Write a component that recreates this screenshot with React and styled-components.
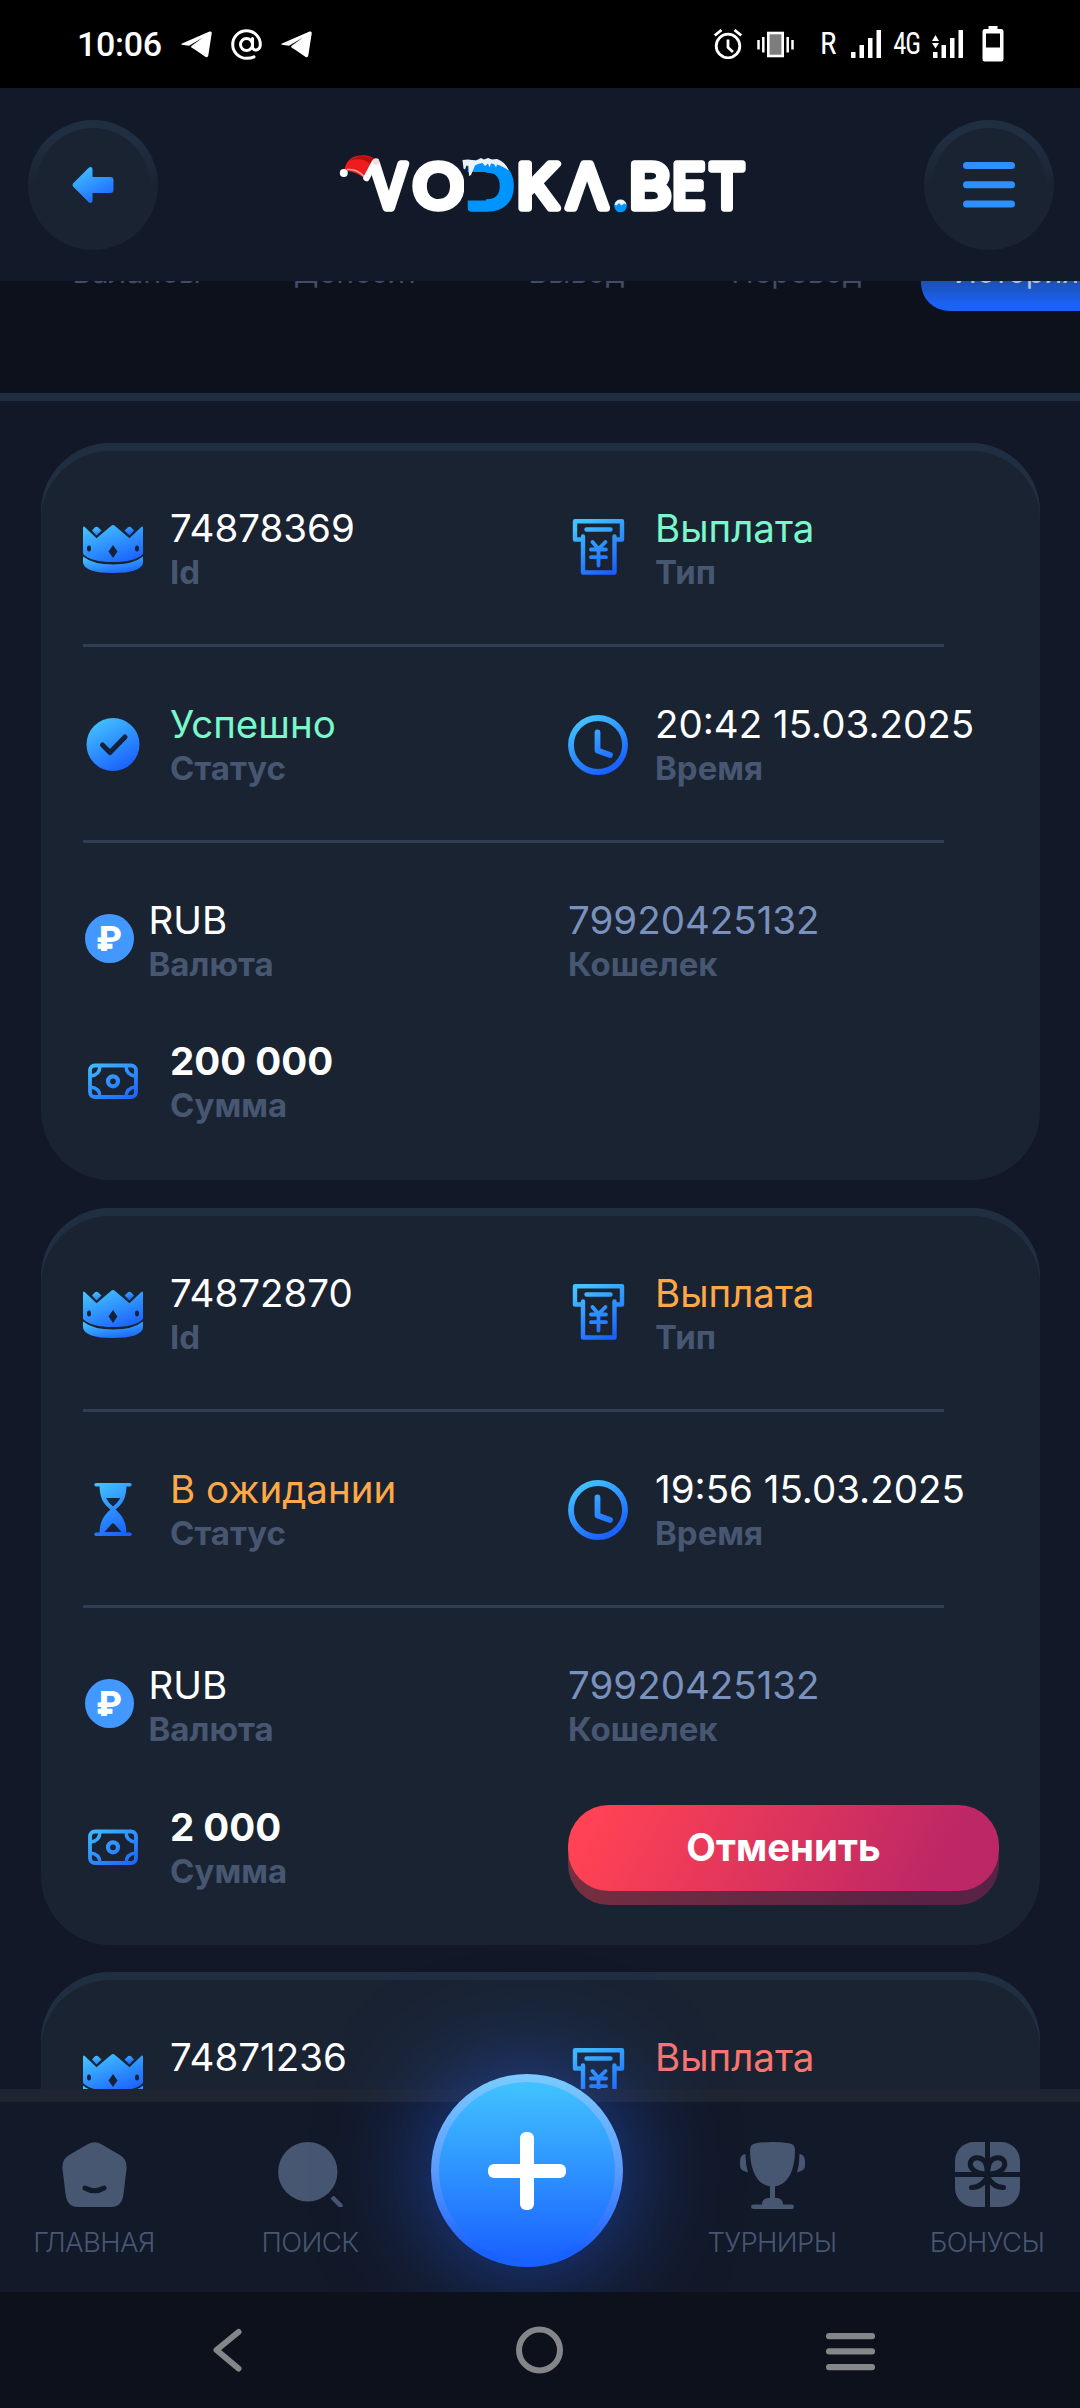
import React from "react";
import styled, { createGlobalStyle } from "styled-components";

const GlobalStyle = createGlobalStyle`
  * {
    box-sizing: border-box;
  }

  body {
    margin: 0;
    background: #121928;
    font-family: Inter, "Noto Sans", sans-serif;
  }

  svg {
    display: block;
    flex-shrink: 0;
  }
`;

const Screen = styled.div`
  width: 1080px;
  height: 2408px;
  display: flex;
  flex-direction: column;
  overflow: hidden;
  background: #121827;
`;

/* ---------- status bar ---------- */

const StatusBar = styled.div`
  height: 88px;
  flex-shrink: 0;
  display: flex;
  align-items: center;
  justify-content: space-between;
  padding: 0 76px 0 77px;
  background: #000;
  color: #fff;
  font-family: Roboto, sans-serif;
`;

const StatusGroup = styled.div`
  display: flex;
  align-items: center;
  gap: ${(props) => props.$gap}px;
`;

const StatusTime = styled.span`
  font-size: 34px;
  line-height: 40px;
  font-weight: 500;
  letter-spacing: -0.3px;
`;

const StatusLetter = styled.span`
  display: flex;
  justify-content: flex-end;
  width: ${(props) => props.$width}px;
  margin: 0 ${(props) => (props.$close ? "-3px 0 -6px" : "0")};
  font-family: "Roboto Condensed", Roboto, sans-serif;
  font-size: 31px;
  line-height: 36px;
  letter-spacing: -1.5px;

  span {
    transform: ${(props) => (props.$close ? "scaleX(0.86)" : "none")};
    transform-origin: right;
  }
`;

const BatterySlot = styled.div`
  margin-left: 3px;
`;

/* ---------- header ---------- */

const Header = styled.header`
  height: 193px;
  flex-shrink: 0;
  display: flex;
  align-items: center;
  justify-content: space-between;
  padding: 0 26px 0 28px;
  background: #121928;
  position: relative;
  z-index: 2;
`;

const RoundButton = styled.button`
  width: 130px;
  height: 130px;
  padding: 0;
  display: flex;
  align-items: center;
  justify-content: center;
  border: 8px solid transparent;
  border-radius: 50%;
  background: linear-gradient(#1a2332, #1a2332) padding-box,
    linear-gradient(#202e42 15%, #1a2332 50%) border-box;
`;

const LogoSvg = styled.svg`
  margin-left: 4px;

  text {
    font-family: Inter, sans-serif;
    font-weight: 400;
    font-size: 61px;
    stroke-width: 7.5px;
    stroke-linejoin: round;
  }
`;

/* ---------- tabs ---------- */

const TabsPanel = styled.nav`
  height: 120px;
  flex-shrink: 0;
  overflow: hidden;
  background: #0d111b;
  border-bottom: 8px solid #202e42;
`;

const TabsRow = styled.div`
  display: flex;
  gap: 27px;
  margin-top: -52px;
  padding-left: 41px;
`;

const Tab = styled.div`
  width: 193px;
  height: 82px;
  flex-shrink: 0;
  display: flex;
  align-items: center;
  justify-content: center;
  padding: 3px 2px 0 0;
  border-radius: 28px;
  font-size: 30.3px;
  color: ${(props) => (props.$active ? "#b3bfd6" : "#414c65")};
  background: ${(props) => (props.$active ? "linear-gradient(#1d4fa8 60%, #1b62f8 92%)" : "none")};
`;

/* ---------- cards ---------- */

const List = styled.main`
  flex: 1;
  min-height: 0;
  overflow: hidden;
  display: flex;
  flex-direction: column;
  gap: 27.5px;
  padding: 42px 40px 0 41px;
`;

const Card = styled.section`
  height: 737px;
  flex-shrink: 0;
  padding: 64px 41px 0 42px;
  border-radius: 69px;
  background: #1a2332;
  box-shadow: inset 0 8px 0 #202e42;
`;

const Row = styled.div`
  display: grid;
  grid-template-columns: 485px 1fr;
  align-items: center;
  height: 84px;
  margin-bottom: ${(props) => (props.$last ? 0 : 57)}px;
`;

const Divider = styled.hr`
  width: 861px;
  height: 3px;
  margin: -4px 0 56px;
  border: 0;
  background: #303d52;
`;

const Field = styled.div`
  display: flex;
  align-items: center;
  gap: ${(props) => (props.$tight ? 15 : 27)}px;
`;

const tones = {
  plain: "#ffffff",
  success: "#7af7cb",
  pending: "#ffa846",
  failed: "#f8766f",
  muted: "#7b91bd",
};

const Value = styled.div`
  font-size: 38.5px;
  line-height: 42px;
  font-weight: ${(props) => (props.$bold ? 700 : 400)};
  color: ${(props) => tones[props.$tone || "plain"]};
  white-space: nowrap;
`;

const Label = styled.div`
  font-size: 33px;
  line-height: 46px;
  margin-bottom: -4px;
  font-weight: 700;
  color: #475671;
`;

const CoinBadge = styled.div`
  width: 49px;
  height: 49px;
  margin: -5px 0 0 1.5px;
  border-radius: 50%;
  display: flex;
  align-items: center;
  justify-content: center;
  background: #4298ff;
  color: #fff;
  font-size: 34px;
  font-weight: 800;
  line-height: 49px;
`;

const CancelButton = styled.button`
  width: 431px;
  height: 86px;
  padding: 0 0 2px;
  border: 0;
  border-radius: 41px;
  font-family: inherit;
  font-size: 38.5px;
  font-weight: 700;
  color: #fff;
  background: linear-gradient(118deg, #ff4254 8%, #bd2765 85%);
  position: relative;

  &::after {
    content: "";
    position: absolute;
    inset: 0;
    top: 14px;
    bottom: -14px;
    border-radius: 41px;
    background: linear-gradient(118deg, #752f40 8%, #582345 85%);
    z-index: -1;
  }
`;

const ButtonHolder = styled.div`
  isolation: isolate;
`;

/* ---------- bottom navigation ---------- */

const BottomNav = styled.nav`
  height: 203px;
  flex-shrink: 0;
  display: grid;
  grid-template-columns: 188px 244px 190px 300px 130px;
  border-top: 13px solid #1f2530;
  background: #121928;
  position: relative;
`;

const NavItem = styled.a`
  display: flex;
  flex-direction: column;
  align-items: center;
  padding-top: 40px;
  gap: 18px;
  font-size: 27.5px;
  line-height: 34px;
  font-weight: 300;
  letter-spacing: -0.6px;
  color: #475671;
`;

const AddButton = styled.button`
  width: 192px;
  height: 193px;
  margin: -28px 0 0 -1px;
  padding: 0;
  display: flex;
  align-items: center;
  justify-content: center;
  border: 8px solid transparent;
  border-radius: 50%;
  background: linear-gradient(#41c3ff, #1a62ff) padding-box,
    linear-gradient(#7acbff, #5b9bff 50%, #1a62ff 92%) border-box;
  box-shadow: 0 0 110px rgba(38, 100, 255, 0.6);
`;

const SystemBar = styled.div`
  height: 116px;
  flex-shrink: 0;
  display: flex;
  align-items: center;
  justify-content: space-between;
  padding: 0 200px 0 198px;
  background: #0d111b;
  position: relative;
  z-index: 1;
`;

/* ---------- icons ---------- */

const Gradients = () => (
  <svg width="0" height="0" style={{ position: "absolute" }}>
    <defs>
      <linearGradient id="blue" gradientUnits="userSpaceOnUse" x1="14" y1="4" x2="42" y2="54">
        <stop offset="0" stopColor="#43c2ff" />
        <stop offset="1" stopColor="#1a61ff" />
      </linearGradient>
      <linearGradient id="blueBox" x1="0.2" y1="0" x2="0.8" y2="1">
        <stop offset="0" stopColor="#43c2ff" />
        <stop offset="1" stopColor="#1a61ff" />
      </linearGradient>
    </defs>
  </svg>
);

const CrownIcon = () => (
  <svg width="60" height="60" viewBox="0 0 60 60">
    <g transform="translate(0 6)">
      <path d="M0 3Q0 .5 2 2.2L13.500 13.200 28 1Q30 -.8 32 1L46.500 13.200 58 2.200Q60 .5 60 3V29Q52 37 30 37T0 29Z" fill="url(#blueBox)" />
      <path d="M0 31.500Q10 39.500 30 39.500T60 31.500V38Q58 48 30 48T0 38Z" fill="url(#blueBox)" />
      <path d="M9 5.500 12 2.300Q13.500 1 15 2.300L18.500 5.500 13.500 10.500ZM41.500 5.500 45 2.300Q46.500 1 48 2.300L51 5.500 46.500 10.500Z" fill="url(#blueBox)" />
      <path d="M30 20 34.500 26.500 30 33 25.500 26.500Z" fill="#132237" />
      <ellipse cx="6" cy="23.500" rx="2" ry="3" fill="#132237" />
      <ellipse cx="54" cy="23.500" rx="2" ry="3" fill="#132237" />
    </g>
  </svg>
);

const PayoutIcon = () => (
  <svg width="60" height="60" viewBox="0 0 60 60" fill="none" stroke="url(#blue)" strokeWidth="4.400" strokeLinecap="round" strokeLinejoin="round">
    <path d="M13.500 20.500H7V2.200H54V20.500H47.500" />
    <path d="M18.500 10.500 42.500 10.490" />
    <path d="M15 17.500V53.500H46.500V17.500" />
    <path d="M24.500 23 30.500 30 37.500 23M30.500 30V46.500M23 30.500H38M23 38.200H38" strokeWidth="3.800" />
  </svg>
);

const CheckIcon = () => (
  <svg width="60" height="60" viewBox="0 0 60 60">
    <circle cx="30" cy="29.500" r="26.500" fill="url(#blue)" />
    <path d="M19.500 30 27 37.500 42 22" fill="none" stroke="#132237" strokeWidth="5" strokeLinecap="round" strokeLinejoin="round" />
  </svg>
);

const HourglassIcon = () => (
  <svg width="60" height="60" viewBox="0 0 60 60" fill="url(#blue)">
    <rect x="11.300" y="3" width="37.400" height="3.600" rx="1.800" />
    <rect x="11.300" y="52.400" width="37.400" height="3.600" rx="1.800" />
    <path fillRule="evenodd" d="M16.500 5H43.500C43.500 17 40 24 32.500 29.500 40 36 43.500 43 43.500 54H16.500C16.500 43 20 36 27.500 29.500 20 24 16.500 17 16.500 5ZM23 18Q26 23.500 30 26.500 34 23.500 37.500 18ZM21.500 52H38.500L31.500 44Q30 42.500 28.500 44Z" />
  </svg>
);

const ClockIcon = () => (
  <svg width="60" height="60" viewBox="0 0 60 60" fill="none" stroke="url(#blue)" strokeWidth="5.800" strokeLinecap="round" strokeLinejoin="round">
    <circle cx="30" cy="30" r="27" />
    <path d="M29.500 17.500V35.500L42 40" />
  </svg>
);

const MoneyIcon = () => (
  <svg width="60" height="60" viewBox="0 0 60 60" fill="none" stroke="url(#blue)" strokeWidth="3.800">
    <rect x="7" y="13.500" width="46" height="31.500" rx="5" />
    <circle cx="30" cy="29.300" r="5" strokeWidth="4.200" />
    <path d="M17 14Q17 23 7.500 24M43 14Q43 23 52.500 24M17 45Q17 36 7.500 35M43 45Q43 36 52.500 35" strokeWidth="3.400" />
  </svg>
);

const HomeIcon = () => (
  <svg width="65" height="65" viewBox="0 0 65 65">
    <path d="M26 2Q32.500 -1.500 39 2L57 12.500Q65.500 17 64.500 27L61.500 52Q60 65 49 65H16Q5 65 3.500 52L.5 27Q-.5 17 8 12.500Z" fill="#475671" />
    <path d="M23 46Q32.500 51.500 42 46" fill="none" stroke="#121928" strokeWidth="5" strokeLinecap="round" />
  </svg>
);

const SearchIcon = () => (
  <svg width="65" height="65" viewBox="0 0 65 65">
    <circle cx="29.800" cy="29.800" r="29.700" fill="#475671" />
    <path d="M55.500 56.500 62.500 63.500" stroke="#475671" strokeWidth="4.500" strokeLinecap="round" />
  </svg>
);

const TrophyIcon = () => (
  <svg width="65" height="65" viewBox="0 0 65 65" fill="#475671" overflow="visible">
    <path d="M10 8Q10 2 16 1.200 32.500 -1.200 49 1.200 55 2 55 8C55 28 48 44.500 32.500 44.500S10 28 10 8Z" />
    <path d="M5.500 12Q0 13 0 19V24Q0 28.500 8 30.500Q5.500 22 5.500 12ZM59.500 12Q65 13 65 19V24Q65 28.500 57 30.500Q59.500 22 59.500 12Z" />
    <path d="M30 42H35V56H37.500Q43 57 43 62.500H51.500Q54 62.500 54 64.800T51.500 67H13.500Q11 67 11 64.800T13.500 62.500H22Q22 57 27.500 56H30Z" />
  </svg>
);

const GiftIcon = () => (
  <svg width="65" height="65" viewBox="0 0 65 65">
    <rect width="65" height="65" rx="19" fill="#475671" />
    <g fill="none" stroke="#121928" strokeWidth="5">
      <path d="M32.500 0V65M0 32.500H65" />
      <path d="M32.500 32C20 32 14 26 15.500 20 18 13.500 27 15 30 20Q32 24 32.500 32ZM32.500 32C45 32 51 26 49.500 20 47 13.500 38 15 35 20Q33 24 32.500 32Z" />
      <path d="M16.500 45.500C24 45.500 29.500 41 32.500 34 35.500 41 41 45.500 48.500 45.500" strokeLinecap="round" />
    </g>
  </svg>
);

const TelegramIcon = () => (
  <svg width="31" height="27" viewBox="0 0 31 27">
    <path d="M1 12.500 28.500 .6Q31 -.3 30.700 2.500L27.300 24.500Q26.800 27.300 24.300 25.800L14.500 19 10.500 16.500Q9.500 15.500 11 14.500L22 6.500 8 14.800 1 13.800Q-.3 13.200 1 12.500Z" fill="#fff" />
  </svg>
);

const AtIcon = () => (
  <svg width="31" height="31" viewBox="0 0 31 31" fill="none" stroke="#fff" strokeWidth="3" strokeLinecap="round">
    <circle cx="15.500" cy="15.500" r="6" />
    <path d="M21.500 9.500V17.500Q21.800 21.500 25.500 21 29.300 20 29.300 15.500A13.800 13.800 0 1 0 15.500 29.300Q20 29.300 23 27.800" />
  </svg>
);

const AlarmIcon = () => (
  <svg width="28" height="30" viewBox="0 0 28 30" fill="none" stroke="#fff" strokeWidth="2.800">
    <circle cx="14" cy="17" r="11.800" />
    <path d="M14 10.500V18.500L19 23M.8 6.500 7.500 1M27.200 6.500 20.500 1" />
  </svg>
);

const VibrateIcon = () => (
  <svg width="37" height="27" viewBox="0 0 37 27">
    <rect x="11.300" y="2" width="14.400" height="23" fill="#7d7d7d" stroke="#fff" strokeWidth="2.600" />
    <path d="M1.500 9V18.500M6.300 6V21.500M30.700 6V21.500M35.500 9V18.500" stroke="#fff" strokeWidth="2.500" />
  </svg>
);

const SignalIcon = ({ data }) => (
  <svg width="32" height="28" viewBox="0 0 32 28" fill="#fff" overflow="visible">
    <rect x="1" y="22" width="4.500" height="6" />
    <rect x="9.500" y="15" width="4.500" height="13" />
    <rect x="18" y="8" width="4.500" height="20" />
    <rect x="26.500" y="0" width="4.500" height="28" />
    {data && <path d="M0 11 3.500 5 7 11ZM0 13H7L3.500 18.500Z" />}
  </svg>
);

const BatteryIcon = () => (
  <svg width="22" height="36" viewBox="0 0 22 36">
    <path fillRule="evenodd" d="M6.500 0H15.500V3H19.500Q21.500 3 21.500 5.500V33Q21.500 35.500 19.500 35.500H2.500Q.5 35.500 .5 33V5.500Q.5 3 2.500 3H6.500ZM4 7.500V21.500H18V7.500Z" fill="#fff" />
  </svg>
);

const letters = [
  { ch: "V", x: 368, w: 42 },
  { ch: "O", x: 412, w: 52.500 },
  { ch: "K", x: 518.500, w: 43 },
  { ch: "Λ", x: 564, w: 47 },
  { ch: "B", x: 631, w: 40 },
  { ch: "E", x: 673.500, w: 31.500 },
  { ch: "T", x: 708, w: 38 },
];

// left bearing and ink width of each letter, in em
const metrics = {
  V: [0.02, 0.66],
  O: [0.055, 0.65],
  D: [0.09, 0.58],
  K: [0.09, 0.56],
  Λ: [0.02, 0.66],
  B: [0.09, 0.5],
  E: [0.09, 0.44],
  T: [0.045, 0.56],
};

const Letter = ({ ch, x, w, fill }) => {
  const [bearing, ink] = metrics[ch];
  const scale = w / (ink * 61 + 7.5);
  const left = x + (3.75 - bearing * 61) * scale;
  return (
    <text transform={`translate(${left} 207.800) scale(${scale} 1)`} fill={fill} stroke={fill}>
      {ch}
    </text>
  );
};

const Logo = () => (
  <LogoSvg width="408" height="66" viewBox="339 151.5 408 66">
    {letters.map((l) => (
      <Letter key={l.ch} {...l} fill="#fff" />
    ))}
    <Letter ch="D" x={468} w={46.5} fill="#0094ff" />
    <rect x="464" y="171.500" width="22" height="28.500" fill="#121928" />
    <path d="M462.500 159.500 468 159 476 160 481 157.500 484 159 488 157.500 492 159 497 158.500Q505 161 509 170 501 165 497 164L496 167 494 163.500 491 163 489.500 167 488 163 485 165.500 482.500 162.500 478 163.500 475 165 471 174.500 469 175.500 468.500 165.500 466.500 165 465 169 463.500 168Z" fill="#eaf3fa" />
    <circle cx="620.500" cy="205.500" r="6.300" fill="#0094ff" />
    <path d="M614.500 204Q616 199 620.500 199T626.500 204L624 203 621.500 205 619 202.500 616.500 205Z" fill="#e5f4ff" />
    <path d="M344 170Q347 156 360 155 368 154 374 158L365 178Q356 171 344 170Z" fill="#ee1c1f" />
    <path d="M350 160Q360 152 374 158L371 164Q362 156 350 160Z" fill="#b5100f" />
    <path d="M347 169Q357 168 364 176" fill="none" stroke="#f9a0a0" strokeWidth="1.500" />
    <path d="M366.500 177.500 374.500 162.500" stroke="#fff" strokeWidth="6.500" strokeLinecap="round" />
    <circle cx="343.800" cy="172.500" r="4" fill="#fff" />
    <circle cx="376" cy="161" r="3.300" fill="#f3dde2" />
  </LogoSvg>
);

/* ---------- data ---------- */

const payouts = [
  { id: "74878369", tone: "success", status: "Успешно", time: "20:42 15.03.2025", sum: "200 000" },
  { id: "74872870", tone: "pending", status: "В ожидании", time: "19:56 15.03.2025", sum: "2 000" },
  { id: "74871236", tone: "failed" },
];

const tabs = ["Балансы", "Депозит", "Вывод", "Перевод", "История"];

const InfoField = ({ icon, value, label, tone, bold, tight }) => (
  <Field $tight={tight}>
    {icon}
    <div>
      <Value $tone={tone} $bold={bold}>{value}</Value>
      <Label>{label}</Label>
    </div>
  </Field>
);

const PayoutDetails = ({ payout }) => {
  const pending = payout.tone === "pending";

  return (
    <>
      <Divider />
      <Row>
        <InfoField icon={pending ? <HourglassIcon /> : <CheckIcon />} value={payout.status} label="Статус" tone={payout.tone} />
        <InfoField icon={<ClockIcon />} value={payout.time} label="Время" />
      </Row>
      <Divider />
      <Row>
        <InfoField tight icon={<CoinBadge>₽</CoinBadge>} value="RUB" label="Валюта" />
        <InfoField value="79920425132" label="Кошелек" tone="muted" />
      </Row>
      <Row $last>
        <InfoField icon={<MoneyIcon />} value={payout.sum} label="Сумма" bold />
        {pending && (
          <ButtonHolder>
            <CancelButton>Отменить</CancelButton>
          </ButtonHolder>
        )}
      </Row>
    </>
  );
};

const PayoutCard = ({ payout }) => (
  <Card>
    <Row>
      <InfoField icon={<CrownIcon />} value={payout.id} label="Id" />
      <InfoField icon={<PayoutIcon />} value="Выплата" label="Тип" tone={payout.tone} />
    </Row>
    {payout.status && <PayoutDetails payout={payout} />}
  </Card>
);

const App = () => {
  return (
    <Screen>
      <GlobalStyle />
      <Gradients />

      <StatusBar>
        <StatusGroup $gap={19}>
          <StatusTime>10:06</StatusTime>
          <TelegramIcon />
          <AtIcon />
          <TelegramIcon />
        </StatusGroup>
        <StatusGroup $gap={15}>
          <AlarmIcon />
          <VibrateIcon />
          <StatusLetter $width={26}><span>R</span></StatusLetter>
          <SignalIcon />
          <StatusLetter $width={29} $close><span>4G</span></StatusLetter>
          <SignalIcon data />
          <BatterySlot>
            <BatteryIcon />
          </BatterySlot>
        </StatusGroup>
      </StatusBar>

      <Header>
        <RoundButton>
          <svg width="42" height="38" viewBox="0 0 42 38">
            <path d="M1 17.500Q0 19 1 20.500L17 36.500Q20.500 38 20.500 34.500V27H38.500Q41.500 27 41.500 24V14Q41.500 11 38.500 11H20.500V3.500Q20.500 0 17 1.500Z" fill="url(#blueBox)" />
          </svg>
        </RoundButton>
        <Logo />
        <RoundButton>
          <svg width="52" height="46" viewBox="0 0 52 46" fill="#2e90ff">
            <rect width="52" height="7" rx="3.500" />
            <rect y="19.300" width="52" height="7" rx="3.500" />
            <rect y="38.500" width="52" height="7" rx="3.500" />
          </svg>
        </RoundButton>
      </Header>

      <TabsPanel>
        <TabsRow>
          {tabs.map((tab) => (
            <Tab key={tab} $active={tab === "История"}>{tab}</Tab>
          ))}
        </TabsRow>
      </TabsPanel>

      <List>
        {payouts.map((payout) => (
          <PayoutCard key={payout.id} payout={payout} />
        ))}
      </List>

      <BottomNav>
        <NavItem><HomeIcon />ГЛАВНАЯ</NavItem>
        <NavItem><SearchIcon />ПОИСК</NavItem>
        <AddButton>
          <svg width="78" height="78" viewBox="0 0 78 78" fill="#fff">
            <rect x="32" y="0" width="14" height="78" rx="6" />
            <rect x="0" y="32" width="78" height="14" rx="6" />
          </svg>
        </AddButton>
        <NavItem><TrophyIcon />ТУРНИРЫ</NavItem>
        <NavItem><GiftIcon />БОНУСЫ</NavItem>
      </BottomNav>

      <SystemBar>
        <svg width="60" height="60" viewBox="0 0 60 60" fill="none" stroke="#85868a" strokeWidth="6" strokeLinecap="round" strokeLinejoin="round">
          <path d="M40.500 12 18.500 30 40.500 48.500" />
        </svg>
        <svg width="60" height="60" viewBox="0 0 60 60" fill="none" stroke="#85868a" strokeWidth="6">
          <circle cx="30.500" cy="30" r="20.500" />
        </svg>
        <svg width="60" height="60" viewBox="0 0 60 60" fill="#85868a">
          <rect x="6" y="13" width="49" height="6.300" rx="3" />
          <rect x="6" y="28.300" width="49" height="6.300" rx="3" />
          <rect x="6" y="44" width="49" height="6.300" rx="3" />
        </svg>
      </SystemBar>
    </Screen>
  );
};

export default App;
